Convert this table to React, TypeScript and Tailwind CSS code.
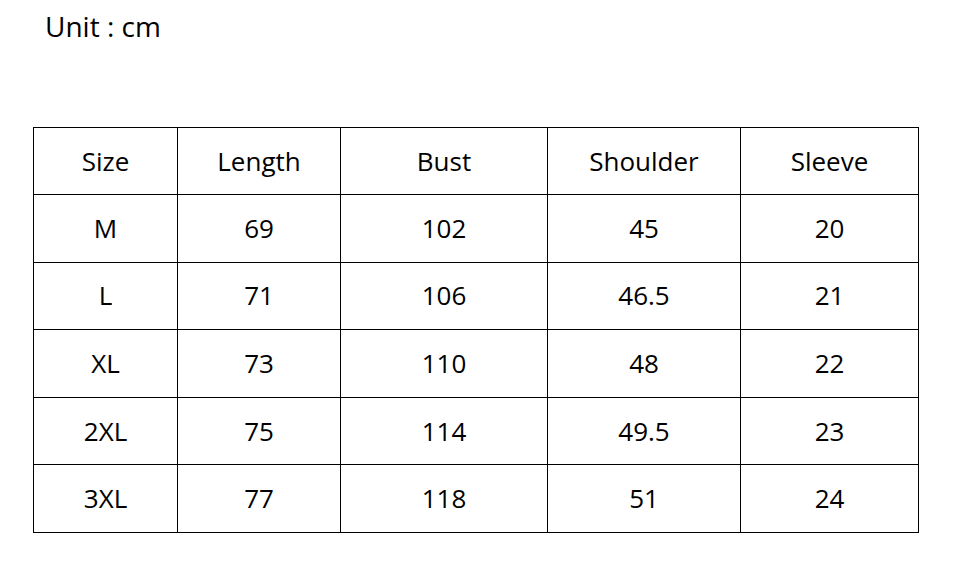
const columns = [
  { label: "Size", width: "w-[144px]" },
  { label: "Length", width: "w-[163px]" },
  { label: "Bust", width: "w-[207px]" },
  { label: "Shoulder", width: "w-[193px]" },
  { label: "Sleeve", width: "w-[178px]" },
];

const rows = [
  ["M", "69", "102", "45", "20"],
  ["L", "71", "106", "46.5", "21"],
  ["XL", "73", "110", "48", "22"],
  ["2XL", "75", "114", "49.5", "23"],
  ["3XL", "77", "118", "51", "24"],
];

export default function App() {
  return (
    <div className="h-[567px] w-[956px] bg-white font-['Open_Sans',sans-serif] text-black">
      {/* unit label */}
      <div className="pt-[7px] pl-[45px] text-[28px] leading-[38px]">
        Unit : cm
      </div>

      {/* size chart */}
      <table className="mt-[82px] ml-[33px] w-[886px] table-fixed border-collapse text-[26px]">
        <thead>
          <tr className="h-[67px]">
            {columns.map(({ label, width }) => (
              <th
                key={label}
                className={`${width} border border-black p-0 text-center font-normal`}
              >
                {label}
              </th>
            ))}
          </tr>
        </thead>
        <tbody>
          {rows.map((row, index) => (
            <tr key={index} className="h-[67.6px]">
              {row.map((cell, i) => (
                <td key={i} className="border border-black p-0 text-center">
                  {cell}
                </td>
              ))}
            </tr>
          ))}
        </tbody>
      </table>
    </div>
  );
}
